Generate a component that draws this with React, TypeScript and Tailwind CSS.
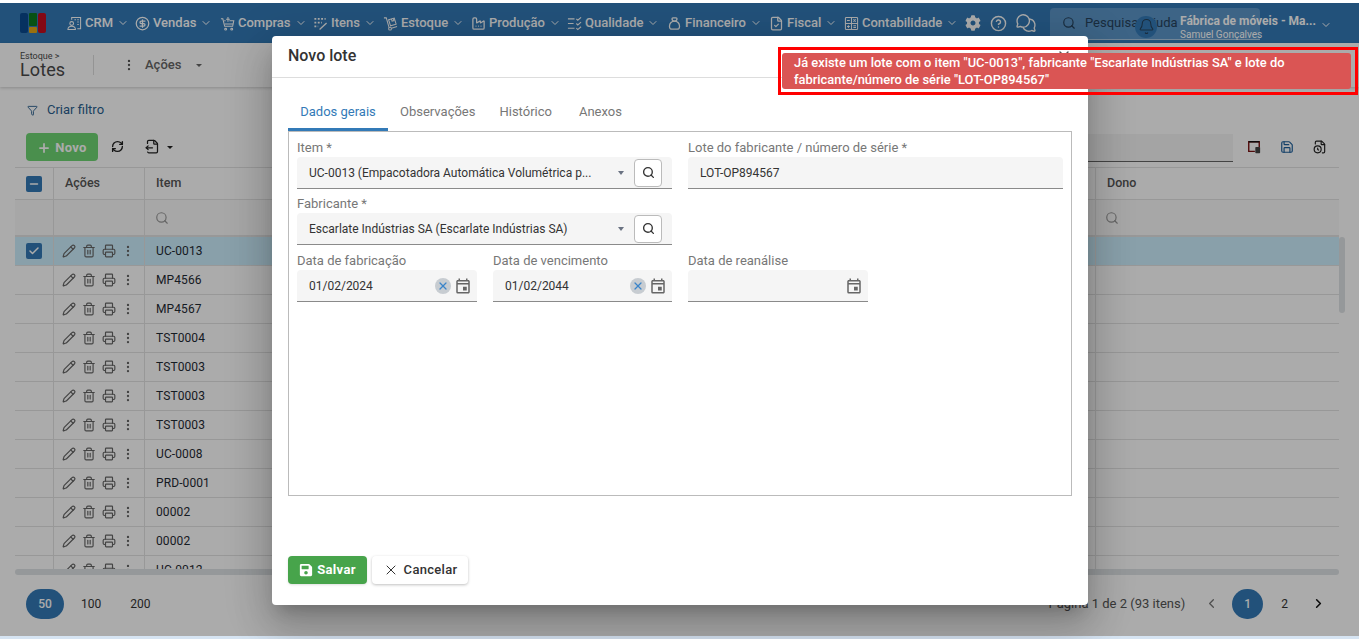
import {
  CircleDollarSign, Factory, FileCheck, ChevronDown, CircleHelp, Search, Bell, EllipsisVertical, Funnel,
  Plus, RefreshCw, FileOutput, Minus, Check, Pencil, Trash2, Printer, Save, X, ChevronLeft, ChevronRight,
  FileClock,
} from 'lucide-react';
import { FaCog, FaSave } from 'react-icons/fa';
import { MdOutlineEvent } from 'react-icons/md';
import { TbMoneybag } from 'react-icons/tb';
import { PiChatsCircle } from 'react-icons/pi';
import type { ComponentType, ReactNode } from 'react';

const font = { fontFamily: 'Roboto, sans-serif' };

type IconProps = { className?: string };

// Menu icons that no package has in this shape
const CrmIcon = ({ className }: IconProps) => (
  <svg viewBox="0 0 16 16" fill="none" stroke="currentColor" strokeWidth="1.1" className={className}>
    <path d="M5 4V1.5h9.5v12H11" />
    <path d="M8 4h1.5M11 4h1.5M11 6.5h1.5M11 9h1.5" />
    <circle cx="5" cy="8" r="2" />
    <path d="M1 14.5c0-2.5 1.7-3.5 4-3.5s4 1 4 3.5z" />
  </svg>
);

const CartPlusIcon = ({ className }: IconProps) => (
  <svg viewBox="0 0 16 16" fill="none" stroke="currentColor" strokeWidth="1.1" className={className}>
    <path d="M1 3h2l2 8h8.5l1.2-6H10" />
    <path d="M5 8.5h9M4.5 5H6" />
    <path d="M8.5 1v5M6.5 3.5h4" />
    <circle cx="6" cy="14" r="1" />
    <circle cx="12.5" cy="14" r="1" />
  </svg>
);

const ItemsIcon = ({ className }: IconProps) => (
  <svg viewBox="0 0 16 16" fill="none" stroke="currentColor" strokeWidth="1.8" strokeDasharray="2 1.6" className={className}>
    <path d="M1.5 3h12M1.5 7h8M1.5 11h4" />
    <path d="M7 14.5l7.5-7" strokeDasharray="none" strokeWidth="1.4" />
  </svg>
);

const TruckIcon = ({ className }: IconProps) => (
  <svg viewBox="0 0 16 16" fill="none" stroke="currentColor" strokeWidth="1.1" className={className}>
    <path d="M1 2h2.5l3 10.5" />
    <circle cx="7.5" cy="13.5" r="1.5" />
    <path d="M9 13l6-1.7" />
    <path d="M6 4l6-1.8 2 6.5-6 1.8z" />
    <path d="M9 3.2l.7 2.3 2-.6-.7-2.3" />
  </svg>
);

const QualityIcon = ({ className }: IconProps) => (
  <svg viewBox="0 0 16 16" fill="none" stroke="currentColor" strokeWidth="1.2" className={className}>
    <path d="M1 3h7M1 8h6M1 13h7" />
    <path d="M10 3l1.5 1.5L15 1.5M10 8l1.5 1.5L15 6.5M10 13l1.5 1.5L15 11.5" />
  </svg>
);

const CalcIcon = ({ className }: IconProps) => (
  <svg viewBox="0 0 16 16" fill="none" stroke="currentColor" strokeWidth="1.1" className={className}>
    <rect x="1.5" y="1.5" width="13" height="13" rx="1" />
    <path d="M1.5 8h13M8 1.5v13" />
    <path d="M3.2 4.8h3M10 3.5l2.5 2.5M12.5 3.5L10 6M3.2 11.3h3M4.7 9.8v3M10 10.3h2.8M10 12.3h2.8" />
  </svg>
);

const LayoutIcon = ({ className }: IconProps) => (
  <svg viewBox="0 0 16 16" fill="none" className={className}>
    <path d="M14 8V2H2v11h7" stroke="#7a1010" strokeWidth="1.6" />
    <path d="M2 2h12" stroke="#111" strokeWidth="1.6" />
    <rect x="9.5" y="8" width="5.5" height="7" rx="0.8" fill="#444" />
  </svg>
);

const navItems: { label: string; icon: ComponentType<IconProps>; className: string }[] = [
  { label: 'CRM', icon: CrmIcon, className: 'w-[68px]' },
  { label: 'Vendas', icon: CircleDollarSign, className: 'w-[85px]' },
  { label: 'Compras', icon: CartPlusIcon, className: 'w-[93px]' },
  { label: 'Itens', icon: ItemsIcon, className: 'w-[70px]' },
  { label: 'Estoque', icon: TruckIcon, className: 'w-[88px]' },
  { label: 'Produção', icon: Factory, className: 'w-[96px]' },
  { label: 'Qualidade', icon: QualityIcon, className: 'w-[100px]' },
  { label: 'Financeiro', icon: TbMoneybag, className: 'w-[102px]' },
  { label: 'Fiscal', icon: FileCheck, className: 'w-[75px]' },
  { label: 'Contabilidade', icon: CalcIcon, className: 'w-[121px]' },
];

const rows = ['UC-0013', 'MP4566', 'MP4567', 'TST0004', 'TST0003', 'TST0003', 'TST0003', 'UC-0008', 'PRD-0001', '00002', '00002', 'UC-0012'];

const Caret = () => <span className="h-0 w-0 border-x-[3.5px] border-t-[4px] border-x-transparent border-t-gray-500" />;

const Header = () => (
  <div className="flex h-10 shrink-0 items-center bg-[#337ab7] pl-5 text-white" style={font}>
    <div className="mr-[21px] flex h-5 w-[26px] gap-[1px]">
      <span className="w-2 rounded-[2px] bg-[#0a4a8f]" />
      <div className="flex w-2 flex-col gap-[1px]">
        <span className="h-[13px] rounded-[1px] bg-[#0b7a1f]" />
        <span className="h-[6px] rounded-[1px] bg-[#e6a817]" />
      </div>
      <span className="w-2 rounded-[2px] bg-[#c40d1e]" />
    </div>
    {navItems.map(({ label, icon: Icon, className }) => (
      <div key={label} className={`flex shrink-0 items-center text-[13px] font-medium ${className}`}>
        <Icon className="mr-[3px] h-[15px] w-[15px] shrink-0" />
        <span>{label}</span>
        <ChevronDown className="ml-1 h-3 w-3" />
      </div>
    ))}
    <FaCog className="h-4 w-4 shrink-0" />
    <CircleHelp className="ml-[9px] h-[17px] w-[17px] shrink-0" />
    <PiChatsCircle className="ml-[8px] h-[22px] w-[22px] shrink-0" />
    <div className="relative ml-[13px] mt-[1px] flex h-8 w-[210px] shrink-0 items-center rounded-t border-b border-[#a9c6e0] bg-[#5b95c8] pl-[12px] text-[13px] text-[#26425c]">
      <Search className="mr-[9px] h-[14px] w-[14px]" />
      Pesquisar ajuda
      <div className="absolute left-[85px] top-[8px] flex h-[22px] w-[22px] items-center justify-center rounded-full bg-[#337ab7]">
        <Bell className="h-[17px] w-[17px]" strokeWidth={1.5} />
      </div>
      <div className="absolute left-[130px] top-[7px] w-[150px] leading-none text-white">
        <div className="whitespace-nowrap text-[12px] font-bold">Fábrica de móveis - Ma...</div>
        <div className="mt-[3px] text-[10px]">Samuel Gonçalves</div>
      </div>
    </div>
    <ChevronDown className="ml-[60px] mt-1 h-3 w-3 shrink-0" />
  </div>
);

const TableRow = ({ code, selected }: { code: string; selected: boolean }) => (
  <div className={`flex h-[29px] shrink-0 border-b border-[#e3e3e3] text-[12px] tracking-[.1px] text-[#1f2a33] ${selected ? 'bg-[#cdeffe]' : ''}`}>
    <div className="flex w-[39px] items-center justify-center border-r border-[#e3e3e3]">
      {selected && (
        <span className="flex h-4 w-4 items-center justify-center rounded-[2px] bg-[#337ab7]">
          <Check className="h-3 w-3 text-white" strokeWidth={3} />
        </span>
      )}
    </div>
    <div className="flex w-[91px] items-center gap-[6px] border-r border-[#e3e3e3] pl-2 text-[#666]">
      <Pencil className="h-[14px] w-[14px]" />
      <Trash2 className="h-[14px] w-[14px]" />
      <Printer className="h-[14px] w-[14px]" />
      <EllipsisVertical className="-ml-[1px] h-[14px] w-[14px]" />
    </div>
    <div className="flex w-[951px] items-center border-r border-[#e3e3e3] pl-[11px]">{code}</div>
    <div className="flex-1" />
  </div>
);

const Background = () => (
  <div className="flex h-full flex-col bg-white" style={font}>
    <Header />
    <div className="flex h-[44px] shrink-0 items-center bg-white pl-5 shadow-[0_1px_3px_rgba(0,0,0,0.2)]">
      <div className="w-[73px] text-[#4a4a4a]">
        <div className="text-[9px] leading-[9px]">Estoque &gt;</div>
        <div className="text-[18px] leading-[18px] tracking-[.1px]">Lotes</div>
      </div>
      <span className="h-[20px] w-px bg-[#ddd]" />
      <EllipsisVertical className="ml-[28px] h-[14px] w-[14px] text-[#555]" />
      <span className="ml-[9px] text-[13px] font-medium text-[#666]">Ações</span>
      <span className="ml-[15px] h-0 w-0 border-x-[3px] border-t-[3px] border-x-transparent border-t-[#666]" />
    </div>
    <div className="flex h-[46px] shrink-0 items-center pl-[27px] text-[13px] text-[#2a5f8f]">
      <Funnel className="mr-[9px] h-[11px] w-[11px]" />
      Criar filtro
    </div>
    <div className="flex h-[34px] shrink-0 items-start pl-[26px] pr-[32px]">
      <div className="flex h-7 w-[72px] items-center justify-center rounded bg-[#6fd574] pt-px text-[13px] font-bold tracking-wide text-white">
        <Plus className="mr-1 h-[14px] w-[14px]" strokeWidth={3} />
        Novo
      </div>
      <RefreshCw className="ml-[13px] mt-[7px] h-[13px] w-[13px] text-[#222]" strokeWidth={2.5} />
      <FileOutput className="ml-[21px] mt-[6px] h-[15px] w-[15px] text-[#222]" />
      <span className="ml-[7px] mt-[13px] h-0 w-0 border-x-[3px] border-t-[3px] border-x-transparent border-t-[#222]" />
      <div className="ml-auto flex items-start gap-[19px]">
        <div className="-mr-[5px] mt-px flex h-7 w-[180px] items-center border-b border-[#666] bg-[#f5f5f5]" />
        <LayoutIcon className="mt-[7px] h-[14px] w-[14px]" />
        <Save className="mt-[7px] h-[14px] w-[14px] text-[#1c5f9c]" />
        <FileClock className="mt-[7px] h-[14px] w-[14px] text-[#222]" />
      </div>
    </div>
    <div className="flex min-h-0 flex-1 pl-[15px] pr-[14px]">
      <div className="flex min-w-0 flex-1 flex-col overflow-hidden">
        <div className="flex h-[33px] shrink-0 border-y border-[#e3e3e3] text-[12.5px] font-medium text-[#555]">
          <div className="flex w-[39px] items-center justify-center border-r border-[#e3e3e3]">
            <span className="flex h-4 w-4 items-center justify-center rounded-[2px] bg-[#337ab7]">
              <Minus className="h-3 w-3 text-white" strokeWidth={3} />
            </span>
          </div>
          <div className="flex w-[91px] items-center border-r border-[#e3e3e3] pl-[11px]">Ações</div>
          <div className="flex w-[951px] items-center border-r border-[#e3e3e3] pl-[11px]">Item</div>
          <div className="flex flex-1 items-center pl-[11px]">Dono</div>
        </div>
        <div className="flex h-[37px] shrink-0 border-b-2 border-[#e3e3e3] bg-[#fafafa]">
          <div className="w-[39px] border-r border-[#e3e3e3]" />
          <div className="w-[91px] border-r border-[#e3e3e3]" />
          <div className="flex w-[951px] items-center border-r border-[#e3e3e3] pl-[10px]">
            <Search className="h-[14px] w-[14px] text-[#999]" />
          </div>
          <div className="flex flex-1 items-center pl-[9px]">
            <Search className="h-[14px] w-[14px] text-[#999]" />
          </div>
        </div>
        <div className="-mb-[3px] min-h-0 flex-1 overflow-hidden">
          {rows.map((code, i) => (
            <TableRow key={i} code={code} selected={i === 0} />
          ))}
        </div>
        <div className="h-[6px] shrink-0 rounded-[3px] bg-[#dfe3e6]" />
      </div>
      <div className="relative w-[6px] shrink-0">
        <div className="absolute left-0 top-[70px] h-[76px] w-[6px] rounded-[3px] bg-[#dfe3e6]" />
      </div>
    </div>
    <div className="flex h-[61px] shrink-0 items-center pb-[4px] pl-[26px] pr-[33px] text-[12px] text-[#333]">
      <span className="flex h-[30px] w-[38px] items-center justify-center rounded-full bg-[#337ab7] font-medium text-white">50</span>
      <span className="ml-[17px]">100</span>
      <span className="ml-[29px]">200</span>
      <span className="ml-auto text-[13px] text-[#555]">Página 1 de 2 (93 itens)</span>
      <ChevronLeft className="ml-[19px] h-[15px] w-[15px] text-[#777]" />
      <span className="ml-[13px] flex h-[30px] w-[31px] items-center justify-center rounded-full bg-[#337ab7] font-medium text-white">1</span>
      <span className="ml-[18px]">2</span>
      <ChevronRight className="ml-[23px] h-[15px] w-[15px] text-[#111]" strokeWidth={2.5} />
    </div>
  </div>
);

const Field = ({ label, className, children }: { label: string; className: string; children: ReactNode }) => (
  <div className={className}>
    <div className="h-[20px] text-[13px] leading-[22px] text-[#777]">{label}</div>
    <div className="flex h-8 items-center rounded-t-[4px] border-b border-[#8a8a8a] bg-[#f5f5f5] pl-3 text-[12px] text-[#333]">
      {children}
    </div>
  </div>
);

const LookupButton = () => (
  <span className="mr-[10px] flex h-7 w-7 shrink-0 items-center justify-center rounded-[4px] border border-[#bbb] bg-white">
    <Search className="h-[13px] w-[13px] text-[#333]" strokeWidth={2.5} />
  </span>
);

const DateIcons = ({ clear }: { clear: boolean }) => (
  <div className="ml-auto mr-[5px] flex items-center gap-[3px]">
    {clear && (
      <span className="flex h-4 w-4 items-center justify-center rounded-full bg-[#c7ccd1]">
        <X className="h-3 w-3 text-[#3a84c9]" strokeWidth={2.5} />
      </span>
    )}
    <MdOutlineEvent className="h-[18px] w-[18px] text-[#666]" />
  </div>
);

const Modal = () => (
  <div
    className="absolute left-[272px] top-[36px] flex h-[569px] w-[816px] flex-col rounded bg-white shadow-[0_11px_15px_-7px_rgba(0,0,0,0.2),0_24px_38px_3px_rgba(0,0,0,0.14),0_9px_46px_8px_rgba(0,0,0,0.12)]"
    style={font}
  >
    <div className="flex h-[42px] shrink-0 items-center justify-between border-b border-[#ddd] pb-[2px] pl-4 pr-4 text-[16px] font-medium text-[#333]">
      Novo lote
      <X className="h-4 w-4 text-[#555]" />
    </div>
    <div className="flex h-[53px] shrink-0 items-end pl-4 text-[13px] text-[#777]">
      <div className="flex h-[36px] w-[100px] items-start justify-center border-b-[3px] border-[#337ab7] pt-[7px] text-[#337ab7]">Dados gerais</div>
      <div className="flex h-[36px] items-start pl-3 pt-[7px]">Observações</div>
      <div className="flex h-[36px] items-start pl-6 pt-[7px]">Histórico</div>
      <div className="flex h-[36px] items-start pl-[27px] pt-[7px]">Anexos</div>
    </div>
    <div className="mx-4 flex h-[365px] shrink-0 flex-col gap-1 border border-[#bbb] pl-2 pr-2 pt-[5px]">
      <div className="flex gap-4">
        <Field label="Item *" className="w-[375px]">
          <span className="flex-1 truncate">UC-0013 (Empacotadora Automática Volumétrica p...</span>
          <Caret />
          <span className="w-[10px]" />
          <LookupButton />
        </Field>
        <Field label="Lote do fabricante / número de série *" className="w-[375px]">LOT-OP894567</Field>
      </div>
      <div className="flex gap-4">
        <Field label="Fabricante *" className="w-[375px]">
          <span className="flex-1 truncate">Escarlate Indústrias SA (Escarlate Indústrias SA)</span>
          <Caret />
          <span className="w-[10px]" />
          <LookupButton />
        </Field>
      </div>
      <div className="mt-px flex gap-4">
        <Field label="Data de fabricação" className="w-[180px]">
          01/02/2024
          <DateIcons clear />
        </Field>
        <Field label="Data de vencimento" className="w-[179px]">
          01/02/2044
          <DateIcons clear />
        </Field>
        <Field label="Data de reanálise" className="w-[180px]">
          <DateIcons clear={false} />
        </Field>
      </div>
    </div>
    <div className="flex flex-1 items-start gap-[5px] pl-4 pt-[60px] text-[13px] tracking-wide">
      <button className="flex h-7 w-[79px] items-center justify-center gap-[4px] rounded bg-[#47a44b] font-bold text-white shadow-sm">
        <FaSave className="h-[14px] w-[14px]" />
        Salvar
      </button>
      <button className="flex h-7 w-[96px] items-center justify-center gap-[5px] rounded bg-white font-medium tracking-[.3px] text-[#333] shadow-[0_1px_3px_rgba(0,0,0,0.25)]">
        <X className="h-[16px] w-[16px]" strokeWidth={1.5} />
        Cancelar
      </button>
    </div>
  </div>
);

const Toast = () => (
  <div className="absolute left-[778px] top-[47px] w-[580px] border-[3px] border-[#ff0000] py-[3px] pl-px pr-[4px]" style={font}>
    <div className="rounded-[3px] bg-[#da5554] py-px pl-3 pr-3 text-[12.9px] font-medium leading-[17px] text-white">
      Já existe um lote com o item "UC-0013", fabricante "Escarlate Indústrias SA" e lote do
      <br />
      fabricante/número de série "LOT-OP894567"
    </div>
  </div>
);

export default function App() {
  return (
    <div className="relative h-[639px] w-[1359px] overflow-hidden bg-white">
      <div className="flex h-full flex-col">
        <div className="h-[3px] shrink-0 bg-white" />
        <div className="min-h-0 flex-1">
          <Background />
        </div>
        <div className="h-[3px] shrink-0 bg-[#d6e4f2]" />
      </div>
      <div className="absolute inset-x-0 bottom-[3px] top-[3px] bg-black/[.33]" />
      <Modal />
      <Toast />
    </div>
  );
}
